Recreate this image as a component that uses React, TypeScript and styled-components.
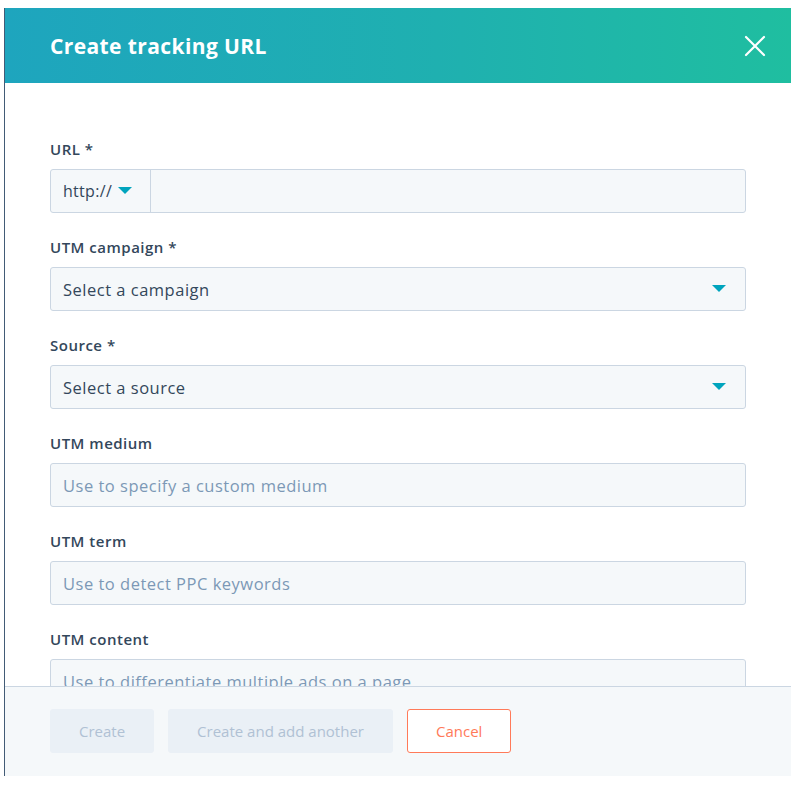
import styled, { createGlobalStyle } from "styled-components";

const GlobalStyle = createGlobalStyle`
  html, body {
    margin: 0;
    padding: 0;
    background: #ffffff;
  }
  body {
    font-family: "Open Sans", "Noto Sans", "Liberation Sans", sans-serif;
    color: #33475b;
  }
`

type Field = {
    label: string
    required?: boolean
    kind: "url" | "select" | "text"
    value?: string
    placeholder?: string
}

const fields: Field[] = [
    {label: "URL", required: true, kind: "url"},
    {label: "UTM campaign", required: true, kind: "select", value: "Select a campaign"},
    {label: "Source", required: true, kind: "select", value: "Select a source"},
    {label: "UTM medium", kind: "text", placeholder: "Use to specify a custom medium"},
    {label: "UTM term", kind: "text", placeholder: "Use to detect PPC keywords"},
    {label: "UTM content", kind: "text", placeholder: "Use to differentiate multiple ads on a page"},
]

const Caret = () => (
    <svg width="14" height="8" viewBox="0 0 14 8">
        <path d="M0 0 L14 0 L7 7 Z" fill="#00a4bd"/>
    </svg>
)

const CloseIcon = () => (
    <svg width="22" height="22" viewBox="0 0 22 22">
        <path d="M2 2 L20 20 M20 2 L2 20" stroke="#ffffff" strokeWidth="2.2" strokeLinecap="round"/>
    </svg>
)

export default function App() {
    return (
        <>
            <GlobalStyle/>
            <Modal>
                <Header>
                    <Title>Create tracking URL</Title>
                    <CloseButton aria-label="Close"><CloseIcon/></CloseButton>
                </Header>
                <Body>
                    {fields.map((f) => (
                        <FormGroup key={f.label}>
                            <Label>{f.label}{f.required ? " *" : ""}</Label>
                            {f.kind === "url" && (
                                <InputBox>
                                    <Prefix>http:// <Caret/></Prefix>
                                    <TextInput/>
                                </InputBox>
                            )}
                            {f.kind === "select" && (
                                <InputBox>
                                    <SelectValue>{f.value}</SelectValue>
                                    <SelectCaret><Caret/></SelectCaret>
                                </InputBox>
                            )}
                            {f.kind === "text" && (
                                <InputBox>
                                    <TextInput placeholder={f.placeholder}/>
                                </InputBox>
                            )}
                        </FormGroup>
                    ))}
                </Body>
                <Footer>
                    <DisabledButton disabled>Create</DisabledButton>
                    <DisabledButton disabled>Create and add another</DisabledButton>
                    <CancelButton>Cancel</CancelButton>
                </Footer>
            </Modal>
        </>
    )
}

const Modal = styled.div`
  margin: 8px 0 0 4px;
  width: 786px;
  border-left: 1px solid #425b76;
  display: flex;
  flex-direction: column;
  background: #ffffff;
`

const Header = styled.div`
  height: 75px;
  padding: 0 25px 0 45px;
  display: flex;
  align-items: center;
  justify-content: space-between;
  background: linear-gradient(90deg, #1ea5be 0%, #1fb0b0 55%, #1fbea0 100%);
`

const Title = styled.h1`
  margin: 0;
  color: #ffffff;
  font-size: 21px;
  font-weight: 700;
  letter-spacing: 0.4px;
`

const CloseButton = styled.button`
  border: 0;
  background: transparent;
  padding: 0;
  display: flex;
  cursor: pointer;
`

const Body = styled.div`
  height: 603px;
  overflow: hidden;
  padding: 54px 45px 0 45px;
  box-sizing: border-box;
  display: flex;
  flex-direction: column;
  gap: 22px;
`

const FormGroup = styled.div`
  display: flex;
  flex-direction: column;
  gap: 8px;
  flex-shrink: 0;
`

const Label = styled.label`
  font-size: 15px;
  font-weight: 600;
  line-height: 24px;
  color: #33475b;
  letter-spacing: 0.5px;
`

const InputBox = styled.div`
  height: 44px;
  box-sizing: border-box;
  border: 1px solid #cbd6e2;
  border-radius: 3px;
  background: #f5f8fa;
  display: flex;
  align-items: center;
`

const Prefix = styled.div`
  height: 100%;
  width: 100px;
  box-sizing: border-box;
  border-right: 1px solid #cbd6e2;
  display: flex;
  align-items: center;
  gap: 6px;
  padding-left: 12px;
  font-size: 16px;
  letter-spacing: 0.3px;
  color: #33475b;
`

const TextInput = styled.input`
  flex: 1;
  height: 100%;
  border: 0;
  background: transparent;
  padding: 0 12px;
  font-family: inherit;
  font-size: 16.5px;
  letter-spacing: 0.5px;
  color: #33475b;
  outline: none;
  &::placeholder {
    color: #7c98b6;
  }
`

const SelectValue = styled.div`
  flex: 1;
  padding-left: 12px;
  font-size: 16.5px;
  letter-spacing: 0.5px;
  color: #33475b;
`

const SelectCaret = styled.div`
  display: flex;
  padding-right: 19px;
`

const Footer = styled.div`
  height: 90px;
  box-sizing: border-box;
  border-top: 1px solid #cbd6e2;
  background: #f5f8fa;
  padding: 22px 45px 0 45px;
  display: flex;
  align-items: flex-start;
  gap: 14px;
`

const ButtonBase = styled.button`
  height: 44px;
  padding: 0 28px;
  border-radius: 3px;
  font-family: inherit;
  font-size: 15px;
  letter-spacing: 0;
  font-weight: 400;
`

const DisabledButton = styled(ButtonBase)`
  border: 1px solid #eaf0f6;
  background: #eaf0f6;
  color: #b0c1d4;
  cursor: not-allowed;
`

const CancelButton = styled(ButtonBase)`
  border: 1px solid #ff7a59;
  background: #ffffff;
  color: #ff7a59;
  cursor: pointer;
`
